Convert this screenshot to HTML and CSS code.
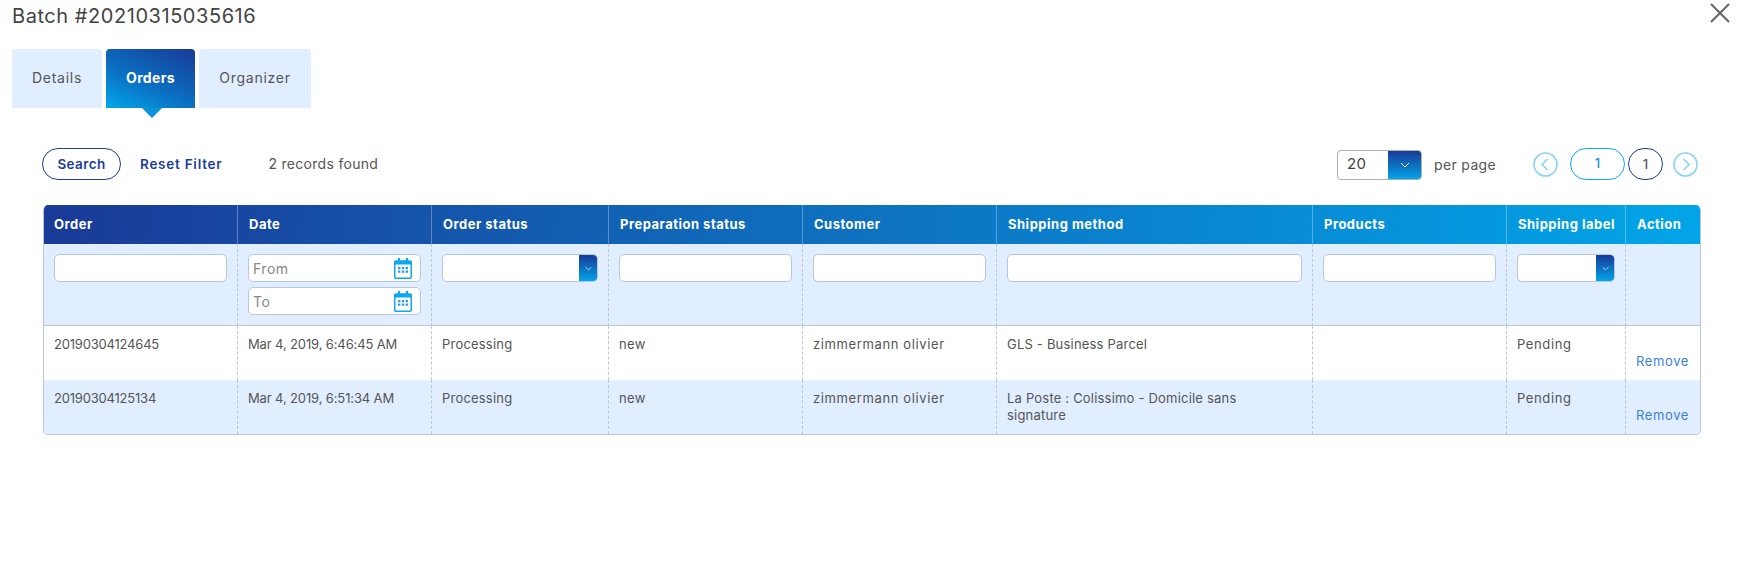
FILE: index.html
```html
<!DOCTYPE html>
<html lang="en">
<head>
<meta charset="utf-8">
<title>Batch #20210315035616</title>
<link rel="stylesheet" href="styles.css">
</head>
<body>
<svg class="defs" width="0" height="0" aria-hidden="true">
  <symbol id="cal" viewBox="0 0 18 21">
    <path fill="#0ba7ef" d="M4 0h2v2.2h6V0h2v2.2h2.2A1.8 1.8 0 0 1 18 4v15.2a1.8 1.8 0 0 1-1.8 1.8H1.8A1.8 1.8 0 0 1 0 19.2V4a1.8 1.8 0 0 1 1.8-1.8H4z"/>
    <rect x="1.5" y="6.5" width="15" height="13" fill="#fff"/>
    <path fill="#2f9ae0" d="M4 9h2.4v2.2H4zM7.8 9h2.4v2.2H7.8zM11.6 9H14v2.2h-2.4zM4 12.6h2.4v2.2H4zM7.8 12.6h2.4v2.2H7.8zM11.6 12.6H14v2.2h-2.4z"/>
  </symbol>
  <symbol id="chev" viewBox="0 0 10 6">
    <path d="M1 1l4 4 4-4" fill="none" stroke="#fff" stroke-width="1"/>
  </symbol>
</svg>
<header class="top">
  <h1 class="title">Batch #20210315035616</h1>
  <svg class="close" viewBox="0 0 20 20"><path d="M1 1l18 18M19 1L1 19" stroke="#666" stroke-width="2" fill="none"/></svg>
</header>
<nav class="tabs">
  <a class="tab tab-details">Details</a>
  <a class="tab tab-orders active">Orders</a>
  <a class="tab tab-organizer">Organizer</a>
</nav>
<main class="content">
  <div class="toolbar">
    <div class="tool-left">
      <button class="btn-search">Search</button>
      <a class="reset">Reset Filter</a>
      <span class="records">2 records found</span>
    </div>
    <div class="tool-right">
      <div class="perpage-select">
        <span class="perpage-val">20</span>
        <span class="perpage-btn"><svg class="chev-lg"><use href="#chev"/></svg></span>
      </div>
      <span class="perpage-label">per page</span>
      <svg class="nav-circle nav-prev" viewBox="0 0 25 25"><circle cx="12.5" cy="12.5" r="11.5" fill="none" stroke="#85d3f4" stroke-width="1.6"/><path d="M14.5 7l-5.5 5.5 5.5 5.5" fill="none" stroke="#85d3f4" stroke-width="1.6"/></svg>
      <span class="page-input">1</span>
      <span class="page-total">1</span>
      <svg class="nav-circle" viewBox="0 0 25 25"><circle cx="12.5" cy="12.5" r="11.5" fill="none" stroke="#85d3f4" stroke-width="1.6"/><path d="M10.5 7l5.5 5.5-5.5 5.5" fill="none" stroke="#85d3f4" stroke-width="1.6"/></svg>
    </div>
  </div>
  <div class="table-wrap">
    <table class="grid">
      <colgroup>
        <col class="c1"><col class="c2"><col class="c3"><col class="c4"><col class="c5"><col class="c6"><col class="c7"><col class="c8"><col class="c9">
      </colgroup>
      <thead>
        <tr>
          <th>Order</th><th>Date</th><th>Order status</th><th>Preparation status</th><th>Customer</th><th>Shipping method</th><th>Products</th><th>Shipping label</th><th>Action</th>
        </tr>
      </thead>
      <tbody>
        <tr class="filters">
          <td><div class="field"></div></td>
          <td>
            <div class="field date"><span>From</span><svg class="cal"><use href="#cal"/></svg></div>
            <div class="field date second"><span>To</span><svg class="cal"><use href="#cal"/></svg></div>
          </td>
          <td><div class="field select"><span class="select-btn"><svg class="chev"><use href="#chev"/></svg></span></div></td>
          <td><div class="field"></div></td>
          <td><div class="field"></div></td>
          <td><div class="field"></div></td>
          <td><div class="field"></div></td>
          <td><div class="field select"><span class="select-btn"><svg class="chev"><use href="#chev"/></svg></span></div></td>
          <td></td>
        </tr>
        <tr class="row">
          <td class="t-id">20190304124645</td><td class="t-date">Mar 4, 2019, 6:46:45 AM</td><td class="t-status">Processing</td><td>new</td><td class="t-wide">zimmermann olivier</td><td class="t-status t-ship">GLS - Business Parcel</td><td></td><td class="t-wide">Pending</td><td class="t-wide"><a class="remove">Remove</a></td>
        </tr>
        <tr class="row alt">
          <td class="t-id">20190304125134</td><td class="t-date">Mar 4, 2019, 6:51:34 AM</td><td class="t-status">Processing</td><td>new</td><td class="t-wide">zimmermann olivier</td><td class="t-status t-ship">La Poste : Colissimo - Domicile sans signature</td><td></td><td class="t-wide">Pending</td><td class="t-wide"><a class="remove">Remove</a></td>
        </tr>
      </tbody>
    </table>
  </div>
</main>
</body>
</html>
```
FILE: styles.css
```css
* { box-sizing: border-box; }
html, body { margin: 0; padding: 0; }
body {
  background: #fff;
  color: #555;
  font-family: Inter, "Open Sans", "Liberation Sans", sans-serif;
  font-size: 13px;
  letter-spacing: .35px;
  height: 563px;
  overflow: hidden;
}
.defs { position: absolute; }

.top {
  display: flex;
  justify-content: space-between;
  align-items: flex-start;
  height: 49px;
  padding: 0 11px 0 12px;
}
.title {
  margin: 4px 0 0;
  font-size: 20px;
  line-height: 24px;
  font-weight: 400;
  color: #444;
  letter-spacing: .55px;
}
.close { width: 20px; height: 20px; margin-top: 3px; }

.tabs { display: flex; gap: 4px; padding-left: 12px; height: 59px; }
.tab {
  position: relative;
  display: flex;
  align-items: center;
  justify-content: center;
  padding-bottom: 2px;
  background: #e1eeff;
  border-radius: 4px 4px 0 0;
  font-size: 14px;
  letter-spacing: .75px;
  color: #555;
}
.tab-details { width: 90px; }
.tab-orders { width: 89px; }
.tab-organizer { width: 112px; }
.tab.active {
  background: linear-gradient(205deg, #173a96 0%, #0a72c4 60%, #02a8ea 100%);
  color: #fff;
  font-weight: 700;
  letter-spacing: .35px;
}
.tab.active::after {
  content: "";
  position: absolute;
  left: 36px;
  top: 100%;
  border-left: 10px solid transparent;
  border-right: 10px solid transparent;
  border-top: 10px solid #0a93d9;
}

.content { padding: 40px 40px 0 42px; }
.toolbar { display: flex; justify-content: space-between; align-items: center; height: 32px; }
.tool-left { display: flex; align-items: center; }
.btn-search {
  width: 79px;
  height: 32px;
  border: 1px solid #1d3d98;
  border-radius: 16px;
  background: #fff;
  color: #1d3d98;
  font: 600 13.5px Inter, sans-serif;
  letter-spacing: .4px;
  padding: 0;
}
.reset { margin-left: 19px; color: #1d3d98; font-weight: 600; font-size: 13.5px; letter-spacing: .75px; }
.records { margin-left: 46px; padding-bottom: 2px; font-size: 14px; letter-spacing: .3px; color: #555; }

.tool-right { display: flex; align-items: center; margin-right: 3px; }
.perpage-select {
  display: flex;
  width: 85px;
  height: 30px;
  margin-top: 2px;
  border: 1px solid #b0b0b0;
  border-radius: 4px;
  overflow: hidden;
}
.perpage-val { flex: 1; padding-left: 9px; font-size: 15px; line-height: 26px; color: #444; }
.perpage-btn {
  width: 33px;
  display: flex;
  align-items: center;
  justify-content: center;
  background: linear-gradient(180deg, #173a96, #02a4e8);
}
.chev-lg { width: 10px; height: 6px; }
.perpage-label { margin-left: 12px; width: 99px; font-size: 14px; color: #555; }
.nav-circle { width: 25px; height: 25px; }
.nav-prev { margin-right: 12px; }
.page-input {
  width: 55px;
  height: 32px;
  border: 1px solid #0aaaf0;
  border-radius: 16px;
  text-align: center;
  line-height: 28px;
  color: #1a8fd8;
  font-weight: 500;
}
.page-total {
  width: 35px;
  height: 32px;
  margin: 0 10px 0 3px;
  border: 1px solid #1d3d98;
  border-radius: 16px;
  text-align: center;
  line-height: 30px;
  color: #555;
  font-weight: 500;
}

.table-wrap {
  margin-top: 25px;
  margin-left: 1px;
  border: 1px solid #b7c7e0;
  border-top: 0;
  border-radius: 5px;
  overflow: hidden;
}
.grid {
  width: 100%;
  table-layout: fixed;
  border-collapse: separate;
  border-spacing: 0;
}
.c1 { width: 194px; }
.c2 { width: 194px; }
.c3 { width: 177px; }
.c4 { width: 194px; }
.c5 { width: 194px; }
.c6 { width: 316px; }
.c7 { width: 194px; }
.c8 { width: 119px; }
.c9 { width: 74px; }

.grid thead tr { background: linear-gradient(95deg, #1a3a97 0%, #0f6dbd 45%, #02a5e8 100%); }
.grid th {
  height: 39px;
  padding: 0 0 2px 11px;
  text-align: left;
  font-weight: 700;
  font-size: 13px;
  letter-spacing: .5px;
  color: #fff;
  border-right: 1px solid rgba(255,255,255,.3);
  white-space: nowrap;
}
.grid th:first-child { padding-left: 10px; }
.grid th:last-child { border-right: 0; }
.grid td {
  padding: 10px 10px 0;
  vertical-align: top;
  line-height: 17px;
  border-right: 1px dashed #b7c7e0;
  color: #555;
}
.grid td:last-child { border-right: 0; }
.grid td.t-id { letter-spacing: -.2px; }
.grid td.t-date { letter-spacing: -.13px; }
.grid td.t-status { letter-spacing: .2px; }
.grid td.t-wide { letter-spacing: .62px; }
.grid td.t-ship { padding-right: 40px; }

.filters { height: 82px; background: #e1eeff; }
.grid .filters td { border-bottom: 1px solid #b7c7e0; padding: 10px 10px 0; }
.field {
  display: flex;
  align-items: center;
  height: 28px;
  background: #fff;
  border: 1px solid #b7c7e0;
  border-radius: 5px;
  overflow: hidden;
}
.date { justify-content: space-between; padding: 0 8px 0 4px; color: #888; font-size: 14px; letter-spacing: .5px; }
.second { margin-top: 5px; }
.cal { width: 18px; height: 21px; }
.select { justify-content: flex-end; }
.select-btn {
  width: 18px;
  height: 100%;
  display: flex;
  align-items: center;
  justify-content: center;
  background: linear-gradient(180deg, #173a96, #02a4e8);
}
.chev { width: 7px; height: 5px; }

.row { height: 54px; background: #fff; }
.row.alt { background: #e1eeff; }
.remove { display: block; margin-top: 17px; color: #3b7fd6; }
.row td:last-child { padding-right: 0; }
```
